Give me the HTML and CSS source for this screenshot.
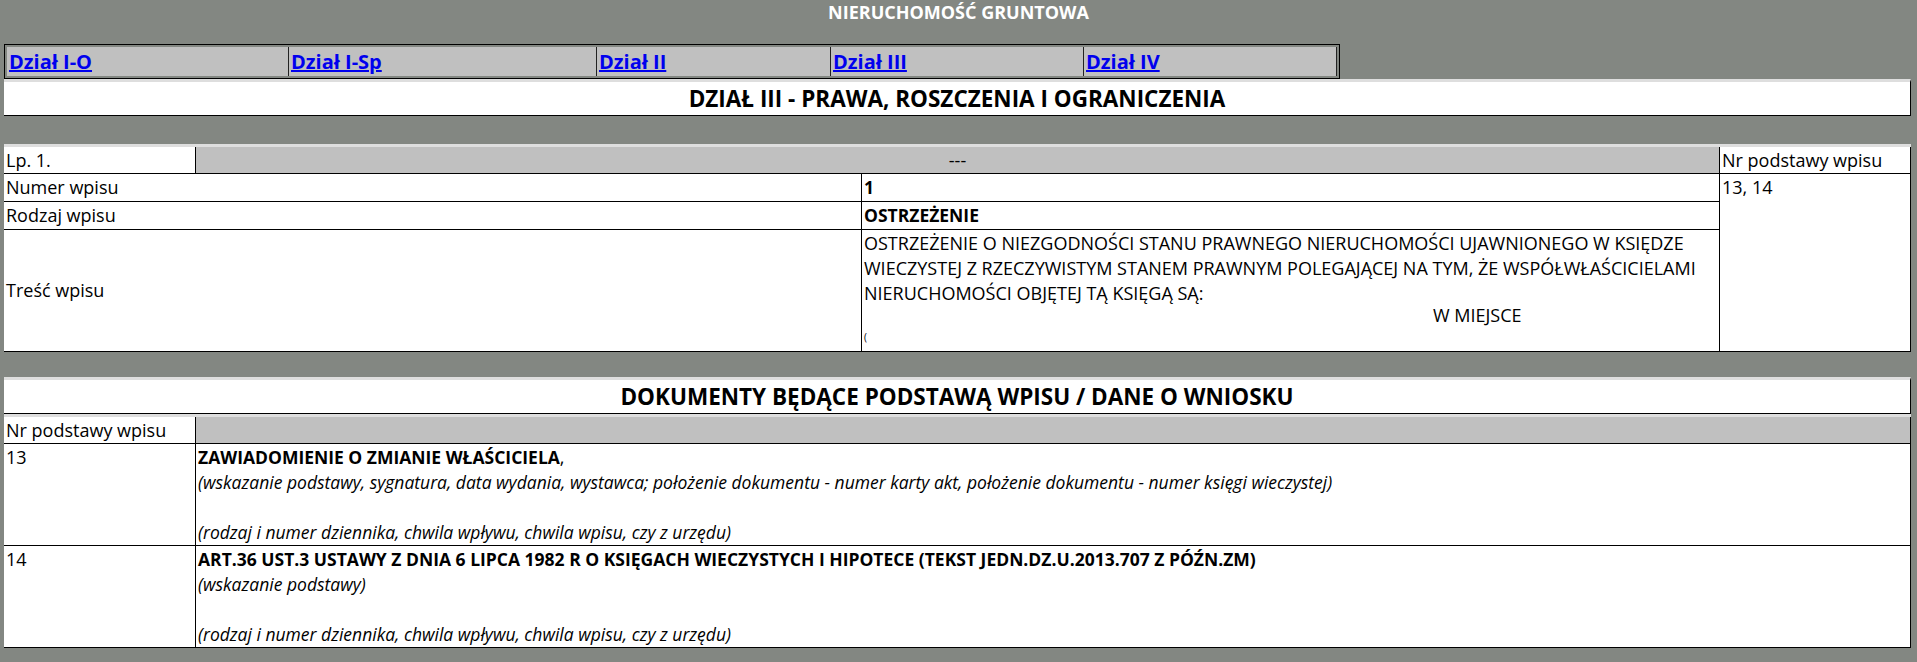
FILE: index.html
```html
<!DOCTYPE html>
<html>
<head>
  <title>Dział III - Prawa, roszczenia i ograniczenia</title>
  <link rel="stylesheet" href="styles.css">
</head>
<body>
  <div class="title">NIERUCHOMOŚĆ GRUNTOWA</div>
  <div class="page">
    <div class="tabs">
      <div class="tab tab-1"><a href="#">Dział I-O</a></div>
      <div class="tab tab-2"><a href="#">Dział I-Sp</a></div>
      <div class="tab tab-3"><a href="#">Dział II</a></div>
      <div class="tab tab-4"><a href="#">Dział III</a></div>
      <div class="tab tab-5"><a href="#">Dział IV</a></div>
    </div>

    <div class="section-head">DZIAŁ III - PRAWA, ROSZCZENIA I OGRANICZENIA</div>

    <div class="entry">
      <div class="cell head">Lp. 1.</div>
      <div class="cell head blank">---</div>
      <div class="cell head">Nr podstawy wpisu</div>

      <div class="cell label">Numer wpisu</div>
      <div class="cell strong">1</div>
      <div class="cell refs">13, 14</div>

      <div class="cell label">Rodzaj wpisu</div>
      <div class="cell strong">OSTRZEŻENIE</div>

      <div class="cell label middle">Treść wpisu</div>
      <div class="cell">
        <div>OSTRZEŻENIE O NIEZGODNOŚCI STANU PRAWNEGO NIERUCHOMOŚCI UJAWNIONEGO W KSIĘDZE WIECZYSTEJ Z RZECZYWISTYM STANEM PRAWNYM POLEGAJĄCEJ NA TYM, ŻE WSPÓŁWŁAŚCICIELAMI NIERUCHOMOŚCI OBJĘTEJ TĄ KSIĘGĄ SĄ:</div>
        <div class="place">W MIEJSCE</div>
        <div class="mark">(</div>
      </div>
    </div>

    <div class="section-head second">DOKUMENTY BĘDĄCE PODSTAWĄ WPISU / DANE O WNIOSKU</div>

    <div class="docs">
      <div class="cell head">Nr podstawy wpisu</div>
      <div class="cell head blank"></div>

      <div class="cell">13</div>
      <div class="cell">
        <div class="doc-name"><b>ZAWIADOMIENIE O ZMIANIE WŁAŚCICIELA</b>,</div>
        <div class="doc-note">(wskazanie podstawy, sygnatura, data wydania, wystawca; położenie dokumentu - numer karty akt, położenie dokumentu - numer księgi wieczystej)</div>
        <div class="empty"></div>
        <div class="doc-note">(rodzaj i numer dziennika, chwila wpływu, chwila wpisu, czy z urzędu)</div>
      </div>

      <div class="cell">14</div>
      <div class="cell">
        <div class="doc-name"><b>ART.36 UST.3 USTAWY Z DNIA 6 LIPCA 1982 R O KSIĘGACH WIECZYSTYCH I HIPOTECE (TEKST JEDN.DZ.U.2013.707 Z PÓŹN.ZM)</b></div>
        <div class="doc-note">(wskazanie podstawy)</div>
        <div class="empty"></div>
        <div class="doc-note">(rodzaj i numer dziennika, chwila wpływu, chwila wpisu, czy z urzędu)</div>
      </div>
    </div>
  </div>
</body>
</html>
```

FILE: styles.css
```css
body {
  font-family: "Open Sans", "Noto Sans", sans-serif;
  font-size: 18px;
  line-height: 25px;
  background-color: #838782;
  color: #000;
  margin: 0;
}

.title {
  text-align: center;
  color: #fff;
  font-weight: bold;
  margin-bottom: 19px;
}

.page {
  padding: 0 6px 0 4px;
}

.tabs {
  display: flex;
  width: 1336px;
  box-sizing: border-box;
  border: 1px solid #000;
  padding: 2px;
}

.tab {
  background-color: #c0c0c0;
  border-right: 1px solid #222;
  padding: 2px 2px;
  box-sizing: border-box;
  font-size: 20px;
  line-height: 25px;
}

.tab-1 { width: 282px; }
.tab-2 { width: 308px; }
.tab-3 { width: 234px; }
.tab-4 { width: 253px; }
.tab-5 { width: 253px; }

.tab a {
  color: #0000ee;
  font-weight: bold;
  text-decoration: underline;
}

.section-head {
  background-color: #fff;
  border-top: 3px solid #dedede;
  border-right: 1px solid #000;
  border-bottom: 1px solid #000;
  text-align: center;
  font-weight: bold;
  font-size: 22.5px;
  line-height: 33px;
}

.section-head.second {
  margin-top: 25px;
}

.entry {
  display: grid;
  grid-template-columns: 192px 666px 858px 191px;
  background-color: #fff;
  border-top: 3px solid #dedede;
  margin-top: 28px;
}

.entry .blank {
  grid-column: span 2;
}

.docs {
  display: grid;
  grid-template-columns: 192px 1fr;
  background-color: #fff;
  border-top: 3px solid #dedede;
}

.cell {
  border-right: 1px solid #000;
  border-bottom: 1px solid #000;
  padding: 1px 2px;
  box-sizing: border-box;
}

.cell.head {
  padding: 1px 2px 0;
}

.docs .cell {
  padding: 1px 2px 0;
}

.strong,
.doc-name b {
  font-weight: bold;
  font-size: 17.5px;
}

.doc-note {
  font-style: italic;
  font-size: 17.5px;
}

.blank {
  background-color: #c0c0c0;
  text-align: center;
}

.label {
  grid-column: span 2;
}

.middle {
  display: flex;
  align-items: center;
}

.refs {
  grid-row: span 3;
}

.place {
  line-height: 18px;
  padding-left: 569px;
}

.mark {
  font-size: 10px;
  line-height: 26px;
}

.empty {
  height: 25px;
}
```
